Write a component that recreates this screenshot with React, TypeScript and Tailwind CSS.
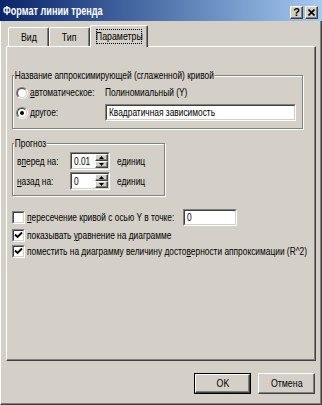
import React from "react";

const font = "font-['Liberation_Sans',Arial,sans-serif]";

function U({ children }: { children: React.ReactNode }) {
  return <span className="underline underline-offset-[1px] decoration-[1px]">{children}</span>;
}

function T({ children, className = "" }: { children: React.ReactNode; className?: string }) {
  return <span className={`inline-block whitespace-nowrap scale-x-[0.76] origin-left ${className}`}>{children}</span>;
}

function TC({ children, className = "" }: { children: React.ReactNode; className?: string }) {
  return <span className={`inline-block whitespace-nowrap scale-x-[0.8] origin-center ${className}`}>{children}</span>;
}

function Sunken({ className = "", children }: { className?: string; children?: React.ReactNode }) {
  return (
    <div className={`shrink-0 border border-t-[#808080] border-l-[#808080] border-r-white border-b-white ${className}`}>
      <div className="w-full h-full border border-t-[#404040] border-l-[#404040] border-r-[#d4d0c8] border-b-[#d4d0c8] bg-white flex items-center overflow-hidden">
        {children}
      </div>
    </div>
  );
}

function Raised({ className = "", children }: { className?: string; children?: React.ReactNode }) {
  return (
    <div className={`bg-[#d4d0c8] border border-t-white border-l-white border-r-[#404040] border-b-[#404040] shadow-[inset_-1px_-1px_0_#808080] flex items-center justify-center ${className}`}>
      {children}
    </div>
  );
}

function Radio({ checked }: { checked?: boolean }) {
  return (
    <div className="shrink-0 w-[12px] h-[12px] rounded-full border border-t-[#808080] border-l-[#808080] border-r-white border-b-white">
      <div className="w-full h-full rounded-full bg-white border border-t-[#404040] border-l-[#404040] border-r-[#d4d0c8] border-b-[#d4d0c8] flex items-center justify-center">
        {checked && <div className="w-[4px] h-[4px] rounded-full bg-black" />}
      </div>
    </div>
  );
}

function Check({ checked }: { checked?: boolean }) {
  return (
    <Sunken className="w-[13px] h-[13px]">
      {checked && (
        <svg width="9" height="9" viewBox="0 0 9 9" className="block">
          <path d="M1 3.5 L3.5 6 L8 1.5" stroke="#000" strokeWidth="1.8" fill="none" />
        </svg>
      )}
    </Sunken>
  );
}

function Spin({ value }: { value: string }) {
  return (
    <Sunken className="w-[40px] h-[18px]">
      <span className="flex-1 pl-[2px]">
        <T>{value}</T>
      </span>
      <div className="flex flex-col h-full w-[13px] shrink-0">
        <Raised className="flex-1">
          <svg width="5" height="3" viewBox="0 0 5 3"><path d="M2.5 0 L5 3 L0 3 Z" fill="#000" /></svg>
        </Raised>
        <Raised className="flex-1">
          <svg width="5" height="3" viewBox="0 0 5 3"><path d="M0 0 L5 0 L2.5 3 Z" fill="#000" /></svg>
        </Raised>
      </div>
    </Sunken>
  );
}

function Group({ title, className = "", children }: { title: string; className?: string; children?: React.ReactNode }) {
  return (
    <div className={`relative shrink-0 border border-[#808080] shadow-[inset_1px_1px_0_white,1px_1px_0_white] ${className}`}>
      <span className="absolute left-[1px] -top-[7px] leading-[13px]">
        <T className="bg-[#d4d0c8] px-[1px]">{title}</T>
      </span>
      {children}
    </div>
  );
}

export default function App() {
  return (
    <div className={`w-[322px] h-[405px] bg-[#d4d0c8] ${font} text-[11px] leading-[13px] text-black flex flex-col overflow-hidden`}>
      {/* Title bar */}
      <div className="h-[21px] shrink-0 flex items-center bg-linear-to-r from-[#0a246a] to-[#a6caf0] pl-[3px] pr-[4px]">
        <span className="text-white font-bold text-[12px] pt-[2px]">
          <T className="scale-x-[0.7]">Формат линии тренда</T>
        </span>
        <div className="ml-auto flex gap-[2px] pt-[3px]">
          <Raised className="w-[13px] h-[13px]">
            <span className="font-bold text-[11px] leading-none">?</span>
          </Raised>
          <Raised className="w-[13px] h-[13px]">
            <svg width="7" height="7" viewBox="0 0 7 7">
              <path d="M0.5 0.5 L6.5 6.5 M6.5 0.5 L0.5 6.5" stroke="#000" strokeWidth="1.6" />
            </svg>
          </Raised>
        </div>
      </div>

      {/* Body */}
      <div className="flex-1 flex flex-col border-l border-l-white border-r border-r-[#404040] border-b border-b-[#404040] shadow-[inset_-1px_-1px_0_#808080]">
        {/* Tabs */}
        <div className="mt-[4px] ml-[5px] flex items-end h-[21px]">
          <div className="ml-[2px] w-[41px] h-[19px] border-t border-l border-t-white border-l-white border-r border-r-[#404040] shadow-[inset_-1px_0_0_#808080] rounded-t-[2px] flex items-center justify-center pt-[1px]">
            <TC>Вид</TC>
          </div>
          <div className="w-[41px] h-[19px] border-t border-l border-t-white border-l-white border-r border-r-[#404040] shadow-[inset_-1px_0_0_#808080] rounded-t-[2px] flex items-center justify-center pt-[1px]">
            <TC>Тип</TC>
          </div>
          <div className="relative z-10 -mb-px w-[58px] h-[22px] bg-[#d4d0c8] border-t border-l border-t-white border-l-white border-r border-r-[#404040] shadow-[inset_-1px_0_0_#808080] rounded-t-[2px] flex items-center justify-center">
            <span className="border border-dotted border-black w-[46px] h-[15px] flex items-center justify-center">
              <TC>Параметры</TC>
            </span>
          </div>
        </div>

        {/* Panel */}
        <div className="ml-[5px] w-[310px] h-[315px] shrink-0 border-t border-l border-t-white border-l-white border-r border-b border-r-[#404040] border-b-[#404040] shadow-[inset_-1px_-1px_0_#808080] pl-[5px] pt-[28px] flex flex-col">
          <Group title="Название аппроксимирующей (сглаженной) кривой" className="w-[291px] h-[54px] pt-[9px] pl-[3px]">
            <div className="grid grid-cols-[89px_auto] items-center h-[15px]">
              <div className="flex items-center gap-[2px]">
                <Radio />
                <T><U>а</U>втоматическое:</T>
              </div>
              <T>Полиномиальный (Y)</T>
            </div>
            <div className="grid grid-cols-[89px_auto] items-center mt-[4px]">
              <div className="flex items-center gap-[2px]">
                <Radio checked />
                <T><U>д</U>ругое:</T>
              </div>
              <Sunken className="w-[191px] h-[17px]">
                <span className="pl-[2px]">
                  <T>Квадратичная зависимость</T>
                </span>
              </Sunken>
            </div>
          </Group>

          <Group title="Прогноз" className="mt-[14px] w-[153px] h-[53px] pt-[8px] pl-[4px]">
            <div className="flex items-center h-[18px]">
              <span className="w-[53px] shrink-0">
                <T>в<U>п</U>еред на:</T>
              </span>
              <Spin value="0.01" />
              <span className="ml-[7px]">
                <T>единиц</T>
              </span>
            </div>
            <div className="flex items-center h-[18px] mt-[2px]">
              <span className="w-[53px] shrink-0">
                <T><U>н</U>азад на:</T>
              </span>
              <Spin value="0" />
              <span className="ml-[7px]">
                <T>единиц</T>
              </span>
            </div>
          </Group>

          <div className="mt-[13px] flex items-center h-[17px]">
            <Check />
            <span className="ml-[2px] w-[156px] shrink-0">
              <T><U>п</U>ересечение кривой с осью Y в точке:</T>
            </span>
            <Sunken className="w-[54px] h-[17px]">
              <span className="pl-[2px]">
                <T>0</T>
              </span>
            </Sunken>
          </div>
          <div className="mt-[3px] flex items-center h-[13px]">
            <Check checked />
            <span className="ml-[2px]">
              <T>показывать <U>у</U>равнение на диаграмме</T>
            </span>
          </div>
          <div className="mt-[3px] flex items-center h-[13px]">
            <Check checked />
            <span className="ml-[2px]">
              <T>поместить на диаграмму величину досто<U>в</U>ерности аппроксимации (R^2)</T>
            </span>
          </div>
        </div>

        {/* Buttons */}
        <div className="mt-[12px] flex justify-end gap-[7px] pr-[6px]">
          <div className="w-[57px] h-[21px] border border-black">
            <Raised className="w-full h-full">
              <TC>OK</TC>
            </Raised>
          </div>
          <Raised className="w-[57px] h-[21px]">
            <TC>Отмена</TC>
          </Raised>
        </div>
      </div>
    </div>
  );
}
